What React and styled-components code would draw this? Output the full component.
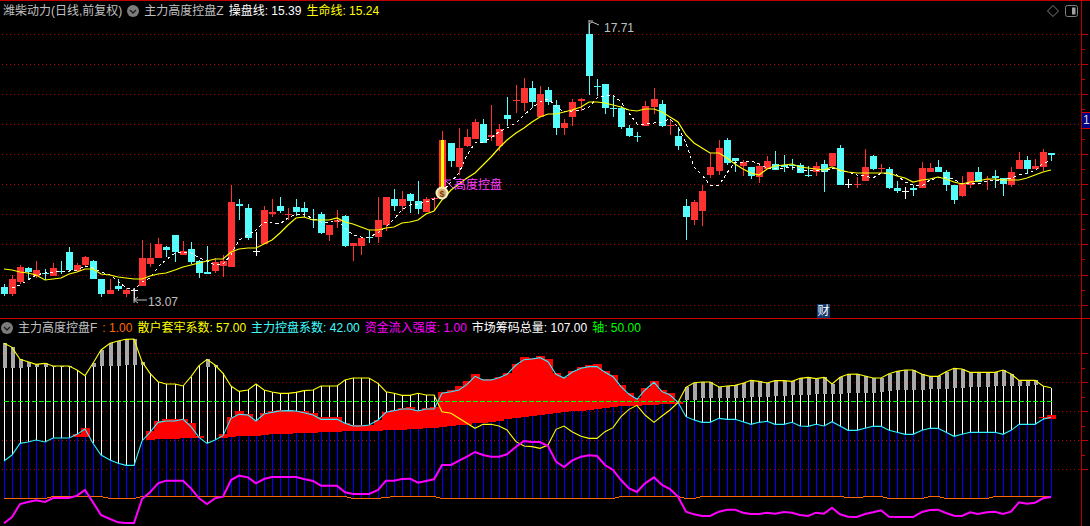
import React from 'react'
import styled, { createGlobalStyle } from 'styled-components'

const GlobalStyle = createGlobalStyle`
  html, body { margin: 0; padding: 0; background: #000; }
`

const RED = '#ff3232'
const CYAN = '#54fcfc'
const barX = (i) => Math.round(4 + 8.12 * i)

// [colour, body top, body bottom, high, low] in page pixels
const candles = [
  ['c',287,294,284,296],['r',279,294,275,296],['r',267,282,265,284],['c',268,272,267,279],['r',270,276,261,278],
  ['c',273,274,269,280],['r',268,276,263,276],['c',271,272,261,274],['c',252,270,247,272],['r',265,271,263,272],
  ['r',257,265,256,266],['c',261,279,260,279],['c',279,294,279,297],['r',290,294,279,294],['c',286,289,279,291],
  ['r',290,294,288,297],['w',290,290,288,300],['r',258,286,240,286],['r',258,264,243,267],['r',244,258,238,258],
  ['c',247,250,246,257],['c',235,252,235,262],['r',251,255,241,255],['c',249,262,242,264],['c',261,273,260,278],
  ['c',272,274,246,274],['r',262,271,258,273],['r',261,266,255,277],['r',202,267,185,267],['c',204,206,199,220],
  ['c',208,238,204,240],['w',251,251,232,256],['r',210,244,206,244],['r',212,214,199,217],['c',206,211,197,213],
  ['r',214,214,208,220],['c',207,212,199,216],['c',208,212,202,217],['c',219,219,209,228],['c',214,233,212,234],
  ['r',225,235,225,241],['r',220,222,210,228],['c',216,246,215,247],['r',243,246,243,261],['r',238,246,238,255],
  ['c',237,238,230,243],['r',220,237,197,243],['r',197,225,197,231],['c',199,206,189,211],['r',199,206,191,211],
  ['c',194,201,193,213],['c',201,209,181,214],['r',199,212,197,212],['r',198,198,197,211],['r',140,188,131,188],
  ['c',143,161,143,167],['r',148,167,128,175],['r',137,146,129,147],['r',122,139,119,139],['c',124,143,119,143],
  ['r',135,137,105,141],['r',129,146,124,151],['c',115,119,97,126],['r',100,101,85,113],['r',88,103,78,111],
  ['c',88,102,81,108],['r',94,117,86,117],['c',90,102,87,105],['c',105,128,100,135],['r',123,128,119,135],
  ['r',102,117,99,126],['r',99,101,98,111],['c',34,76,24,95],['c',86,87,79,96],['c',84,108,84,114],
  ['c',108,109,95,117],['c',108,127,106,129],['c',128,136,125,137],['c',136,137,132,142],['r',106,126,101,126],
  ['r',99,107,88,114],['c',104,126,100,127],['r',125,125,120,135],['c',136,146,127,150],['c',206,217,199,240],
  ['r',202,220,200,225],['r',191,211,185,226],['r',167,175,153,178],['r',148,171,140,175],['c',140,163,138,165],
  ['c',158,161,158,172],['r',162,166,160,176],['c',167,176,167,179],['r',166,177,163,183],['r',161,169,156,169],
  ['c',164,170,151,170],['c',165,167,155,172],['c',165,166,159,170],['c',165,173,163,173],['c',175,175,166,177],
  ['r',166,172,162,176],['c',164,172,160,192],['r',153,166,153,166],['c',148,185,145,185],['w',184,184,179,188],
  ['r',184,184,177,188],['r',167,181,149,181],['c',156,169,155,170],['r',168,168,164,173],['c',169,188,167,189],
  ['c',188,191,181,193],['w',191,191,187,199],['c',188,190,185,196],['r',168,188,162,188],['r',168,172,163,172],
  ['c',167,172,160,172],['c',172,185,170,191],['c',185,200,185,204],['r',184,196,176,197],['r',172,185,172,188],
  ['c',172,182,167,182],['r',179,179,176,190],['c',176,178,170,188],['c',178,184,178,196],['r',172,185,167,187],
  ['r',160,169,152,169],['c',160,169,156,174],['r',166,169,159,169],['r',152,167,149,171],['c',153,155,153,161],
]

const lifeLine = [
  269,270,272,273,275,280,279,278,274,272,269,269,274,275,277,278,279,279,276,274,273,270,267,265,263,261,259,259,252,249,
  248,248,244,240,233,225,218,217,220,220,220,218,222,224,227,230,230,228,227,223,222,220,214,211,200,190,184,178,173,165,
  157,148,140,133,128,122,117,114,114,112,110,107,102,102,103,105,107,110,111,109,109,112,117,122,135,143,148,153,153,158,
  164,169,173,175,169,166,165,164,167,168,169,170,167,170,172,173,173,173,173,173,176,178,182,180,179,177,179,182,184,182,
  181,179,179,180,180,180,178,175,172,170,
]

// starts at bar 1
const traderLine = [
  288,285,280,275,273,272,271,271,270,266,268,272,275,281,288,290,282,278,267,260,253,252,253,258,261,265,264,255,240,235,
  230,222,223,224,218,214,214,219,222,222,220,228,235,237,237,233,227,219,210,205,204,202,199,192,182,173,155,143,142,138,
  132,128,123,115,108,102,99,106,112,111,110,107,98,96,95,102,113,124,124,123,122,119,127,143,167,175,185,185,173,162,
  162,161,164,168,168,168,167,170,171,170,172,168,171,172,175,176,178,173,174,175,182,185,186,180,178,177,179,184,183,184,
  181,180,180,178,175,173,171,163,161,
]

// lower pane series, measured off a 3x crop that starts at y = 315
const toY = (v) => 315 + v / 3

const retail = [
  85,97,133,140,148,145,153,153,153,165,182,145,105,85,78,73,72,140,175,200,207,207,213,185,152,133,150,175,213,229,
  225,207,225,231,235,235,232,227,225,213,213,213,195,189,189,189,205,230,235,241,241,235,240,240,290,295,310,325,340,328,
  328,333,345,380,393,395,400,390,343,333,350,364,370,370,350,338,305,283,271,300,322,303,285,262,217,203,201,201,216,213,
  211,205,196,199,204,197,197,199,190,187,191,187,207,187,178,177,183,189,189,176,169,165,165,178,184,184,170,160,162,172,
  172,172,172,165,177,196,196,196,213,218,
]

const control = [
  438,420,385,381,375,381,369,369,369,358,342,385,420,435,445,451,451,378,352,322,318,318,313,335,367,385,375,362,310,298,
  300,318,297,292,288,287,288,293,300,313,313,313,325,333,333,330,315,292,287,282,282,288,282,282,235,230,225,208,184,195,
  195,188,178,150,134,132,128,140,178,189,172,160,155,155,172,185,215,238,253,225,202,230,240,262,305,315,322,322,310,313,
  313,320,328,322,319,328,328,322,333,334,328,333,320,333,346,346,340,334,334,346,352,358,358,346,340,340,352,364,358,352,
  352,352,352,358,346,328,328,328,313,307,
]

const inflow = [
  625,606,567,561,556,561,549,549,549,542,525,562,600,612,622,624,624,552,532,505,497,497,497,520,550,567,550,545,495,482,
  487,505,492,486,486,486,486,492,498,512,512,512,532,537,537,537,525,497,497,492,491,503,498,493,450,450,437,425,411,420,
  425,425,418,395,378,381,381,393,440,456,437,425,421,423,450,465,495,520,531,505,487,510,522,545,590,598,603,603,590,584,
  584,593,597,597,593,596,591,593,600,603,593,596,578,598,605,606,597,592,586,605,606,606,606,591,585,584,594,602,603,592,
  597,592,590,597,590,562,566,563,550,546,
]

// [first bar, last bar, level] for the orange 总量 line
const axisRuns = [
  [0,5,550],[6,12,545],[13,16,550],[17,42,545],[43,46,550],[47,47,547],[48,53,545],[54,75,550],[76,83,545],[84,85,550],
  [86,103,545],[104,104,547],[105,105,549],[106,108,545],[109,113,550],[114,115,545],[116,121,550],[122,129,545],
]
const chips = axisRuns.flatMap(([from, to, level]) => Array.from({ length: to - from + 1 }, () => level))

// [bar, top, bottom]
const redBars = [
  [9,358,365],[10,340,365],[18,348,375],[19,318,372],[20,313,372],[21,311,371],[22,311,369],[23,325,369],[24,363,369],
  [27,357,369],[28,306,367],[29,288,364],[30,297,363],[31,315,362],[32,294,360],[33,288,358],[34,285,358],[35,285,357],
  [36,288,355],[37,289,354],[38,295,353],[39,306,352],[40,306,351],[41,306,350],[42,323,348],[43,330,348],[44,330,347],
  [45,330,347],[46,315,347],[47,290,345],[48,285,345],[49,280,344],[50,275,343],[51,285,342],[52,280,340],[53,275,339],
  [54,232,336],[55,225,333],[56,212,331],[57,197,329],[58,177,325],[59,191,323],[60,191,321],[61,185,317],[62,175,313],
  [63,147,310],[64,126,307],[65,128,304],[66,123,300],[67,132,296],[68,173,293],[69,185,291],[70,168,289],[71,157,287],
  [72,150,285],[73,148,281],[74,168,278],[75,180,275],[76,210,273],[77,235,272],[78,250,272],[79,219,270],[80,198,269],
  [81,225,268],[82,234,266],[83,262,266],[128,306,310],[129,300,311],
]

// [bar, bottom], the top is the yellow line
const grayBars = [
  [0,158],[1,158],[2,158],[3,155],[4,155],[5,155],[6,157],[7,157],[8,157],[11,155],[12,152],[13,152],[14,152],[15,150],
  [16,150],[17,150],[25,155],[26,155],[84,255],[85,255],[86,250],[87,250],[88,250],[89,250],[90,250],[91,250],[92,245],
  [93,247],[94,247],[95,243],[96,243],[97,240],[98,240],[99,240],[100,238],[101,238],[102,238],[103,237],[104,235],
  [105,234],[106,233],[107,233],[108,232],[109,229],[110,226],[111,225],[112,225],[113,225],[114,222],[115,222],[116,222],
  [117,220],[118,220],[119,216],[120,216],[121,216],[122,213],[123,213],[124,213],[125,213],[126,213],[127,210],
]

const upperGrid = [34, 64, 94, 124, 154, 184, 214, 244, 275, 305]
const lowerGrid = [353, 382, 411, 440, 469]
const upperTicks = [34, 49, 64, 79, 94, 109, 124, 139, 154, 169, 184, 199, 214, 229, 244, 259, 275, 290, 305]
const lowerTicks = [353, 368, 382, 397, 411, 426, 440, 455, 469]

const points = (values, y = (v) => v, first = 0) =>
  values.map((v, i) => `${barX(i + first)},${y(v)}`).join(' ')

const Screen = styled.div`
  width: 1090px;
  height: 526px;
  display: flex;
  flex-direction: column;
  box-sizing: border-box;
  border-top: 1px solid #c00000;
  background: #000;
  overflow: hidden;
  font-family: "Liberation Sans", "Noto Sans CJK SC", sans-serif;
  font-size: 12px;
`

const Pane = styled.section`
  display: flex;
  flex: ${({ $grow }) => ($grow ? 1 : 'none')};
  height: ${({ $height }) => ($height ? `${$height}px` : 'auto')};
  min-height: 0;
  box-sizing: border-box;
  border-bottom: ${({ $ruled }) => ($ruled ? '1px solid #d00000' : 'none')};
`

const Plot = styled.div`
  position: relative;
  flex: 1;
  min-width: 0;
  display: flex;
  flex-direction: column;
`

const Legend = styled.div`
  display: flex;
  align-items: center;
  gap: 5px;
  flex: none;
  height: ${({ $height }) => $height}px;
  padding-left: ${({ $inset }) => $inset}px;
  white-space: nowrap;
`

const Reading = styled.span`
  color: ${({ $color }) => $color || '#c0c0c0'};
  line-height: 14px;
`

const Tools = styled.div`
  display: flex;
  align-items: center;
  gap: 6px;
  margin-left: auto;
  margin-right: 3px;
`

const Chart = styled.svg`
  display: block;
  flex: none;
  width: 1081px;
  height: ${({ $height }) => $height}px;
  overflow: hidden;
`

const Axis = styled.div`
  position: relative;
  flex: none;
  width: 9px;
  box-sizing: border-box;
  border-left: 1px solid #c00000;
`

const AxisTicks = styled.svg`
  display: block;
  width: 8px;
  height: 100%;
`

const PriceTag = styled.div`
  position: absolute;
  top: 111px;
  left: 0;
  width: 8px;
  height: 17px;
  box-sizing: border-box;
  border-top: 1px solid #d00000;
  border-bottom: 1px solid #d00000;
  background: #000080;
  color: #d8d8d8;
  line-height: 15px;
  padding-left: 1px;
  overflow: hidden;
`

const FinanceBadge = styled.div`
  position: absolute;
  left: 817px;
  bottom: 0;
  width: 13px;
  height: 14px;
  background: #14396b;
  color: #fff;
  line-height: 14px;
  text-align: center;
`

const ChartText = styled.text`
  font-family: "Liberation Sans", "Noto Sans CJK SC", sans-serif;
  font-size: 12px;
  fill: ${({ $color }) => $color};
`

const MenuIcon = () => (
  <svg width="12" height="12" viewBox="0 0 12 12">
    <circle cx="6" cy="6" r="6" fill="#7c7c7c" />
    <path d="M3 5l3 3 3-3" fill="none" stroke="#1c1c1c" strokeWidth="1.4" />
  </svg>
)

const DiamondIcon = () => (
  <svg width="12" height="12" viewBox="0 0 12 12">
    <path d="M6 .5L11.5 6 6 11.5.5 6z" fill="none" stroke="#808080" />
  </svg>
)

const SideIcon = () => (
  <svg width="13" height="12" viewBox="0 0 13 12">
    <rect x=".5" y=".5" width="12" height="11" rx="2" fill="none" stroke="#808080" />
    <rect x="7" y="2.5" width="3.5" height="7" fill="#a0a0a0" />
  </svg>
)

function GridLines({ levels }) {
  return levels.map((y) => (
    <line key={y} x1="2" x2="1081" y1={y + 0.5} y2={y + 0.5} stroke="#b00000" strokeDasharray="1 3" />
  ))
}

function Candle({ bar, i }) {
  const [kind, top, bottom, high, low] = bar
  const x = barX(i)
  const color = kind === 'r' ? RED : kind === 'c' ? CYAN : '#fff'
  return (
    <g shapeRendering="crispEdges">
      <rect x={x} y={high} width="1" height={low - high} fill={color} />
      <rect x={x - 3} y={top} width="7" height={Math.max(bottom - top, 1)} fill={color} />
    </g>
  )
}

function PriceChart() {
  return (
    <Chart $height={298} viewBox="0 20 1081 298">
      <GridLines levels={upperGrid} />
      {candles.map((bar, i) => <Candle key={i} bar={bar} i={i} />)}
      <g shapeRendering="crispEdges">
        <rect x="441" y="140" width="3" height="47" fill="#ffff00" />
      </g>
      <polyline points={points(traderLine, undefined, 1)} fill="none" stroke="#fff" strokeDasharray="3 3" shapeRendering="crispEdges" />
      <polyline points={points(lifeLine)} fill="none" stroke="#ffff00" strokeWidth="1.2" />

      <path d="M589 20V34M589 21H593M589 24L592 22L599 25" fill="none" stroke="#c0c0c0" />
      <ChartText x="604" y="32" $color="#c0c0c0">17.71</ChartText>
      <path d="M134 288V303M134 300H147M134 300L138 297M134 300L138 303" fill="none" stroke="#c0c0c0" />
      <ChartText x="148" y="306" $color="#c0c0c0">13.07</ChartText>

      <circle cx="442" cy="193" r="6.5" fill="#fff2c0" />
      <circle cx="442" cy="193" r="4.5" fill="#dcb878" />
      <text x="442" y="196.5" textAnchor="middle" fontFamily="Liberation Sans" fontSize="9" fontWeight="700" fill="#7a3a18">$</text>
      <path d="M445 180L453 188M445 180V186M445 180H451" fill="none" stroke="#ff40ff" />
      <ChartText x="454" y="189" $color="#ff40ff">高度控盘</ChartText>
    </Chart>
  )
}

function FlowChart() {
  return (
    <Chart $height={189} viewBox="0 337 1081 189">
      <GridLines levels={lowerGrid} />
      <g shapeRendering="crispEdges">
        {retail.map((v, i) => control[i] > v && (
          <rect key={i} x={barX(i)} y={toY(v)} width="1" height={(control[i] - v) / 3} fill="#ffffff" />
        ))}
        {control.map((v, i) => (
          <rect key={i} x={barX(i)} y={toY(v)} width="1" height={(chips[i] - v) / 3} fill="#0000ff" />
        ))}
        {grayBars.map(([i, bottom]) => (
          <rect key={i} x={barX(i) - 1} y={toY(retail[i])} width="4" height={(bottom - retail[i]) / 3} fill="#a8a8a8" />
        ))}
        {redBars.map(([i, top, bottom]) => (
          <rect key={i} x={barX(i) - 4} y={toY(top)} width="9" height={(bottom - top) / 3} fill="#ff0000" />
        ))}
      </g>
      <line x1="4" x2="1052" y1="401.5" y2="401.5" stroke="#00ff00" strokeDasharray="5 2" shapeRendering="crispEdges" />
      <polyline points={points(chips, toY)} fill="none" stroke="#ff6600" shapeRendering="crispEdges" />
      <polyline points={points(retail, toY)} fill="none" stroke="#ffff00" strokeWidth="1.1" />
      <polyline points={points(control, toY)} fill="none" stroke="#30f0ff" strokeWidth="1.1" />
      <polyline points={points(inflow, toY)} fill="none" stroke="#ff00ff" strokeWidth="2" />
    </Chart>
  )
}

function Ticks({ levels, major, viewBox }) {
  return (
    <AxisTicks viewBox={viewBox} preserveAspectRatio="xMinYMin slice">
      {levels.map((y) => (
        <line key={y} x1="0" x2={major.includes(y) ? 6 : 3} y1={y + 0.5} y2={y + 0.5} stroke="#c00000" />
      ))}
    </AxisTicks>
  )
}

export default function App() {
  return (
    <>
      <GlobalStyle />
      <Screen>
        <Pane $height={318} $ruled>
          <Plot>
            <Legend $height={19} $inset={3}>
              <Reading>潍柴动力(日线,前复权)</Reading>
              <MenuIcon />
              <Reading>主力高度控盘Z</Reading>
              <Reading $color="#fff">操盘线: 15.39</Reading>
              <Reading $color="#ffff00">生命线: 15.24</Reading>
              <Tools>
                <DiamondIcon />
                <SideIcon />
              </Tools>
            </Legend>
            <PriceChart />
            <FinanceBadge>财</FinanceBadge>
          </Plot>
          <Axis>
            <Ticks levels={upperTicks} major={upperGrid} viewBox="0 1 8 317" />
            <PriceTag>1</PriceTag>
          </Axis>
        </Pane>
        <Pane $grow>
          <Plot>
            <Legend $height={18} $inset={1}>
              <MenuIcon />
              <Reading>主力高度控盘F</Reading>
              <Reading $color="#ff6a00">: 1.00</Reading>
              <Reading $color="#ffff00">散户套牢系数: 57.00</Reading>
              <Reading $color="#40ffff">主力控盘系数: 42.00</Reading>
              <Reading $color="#ff00ff">资金流入强度: 1.00</Reading>
              <Reading $color="#fff">市场筹码总量: 107.00</Reading>
              <Reading $color="#00ff00">轴: 50.00</Reading>
            </Legend>
            <FlowChart />
          </Plot>
          <Axis>
            <Ticks levels={lowerTicks} major={lowerGrid} viewBox="0 319 8 207" />
          </Axis>
        </Pane>
      </Screen>
    </>
  )
}
